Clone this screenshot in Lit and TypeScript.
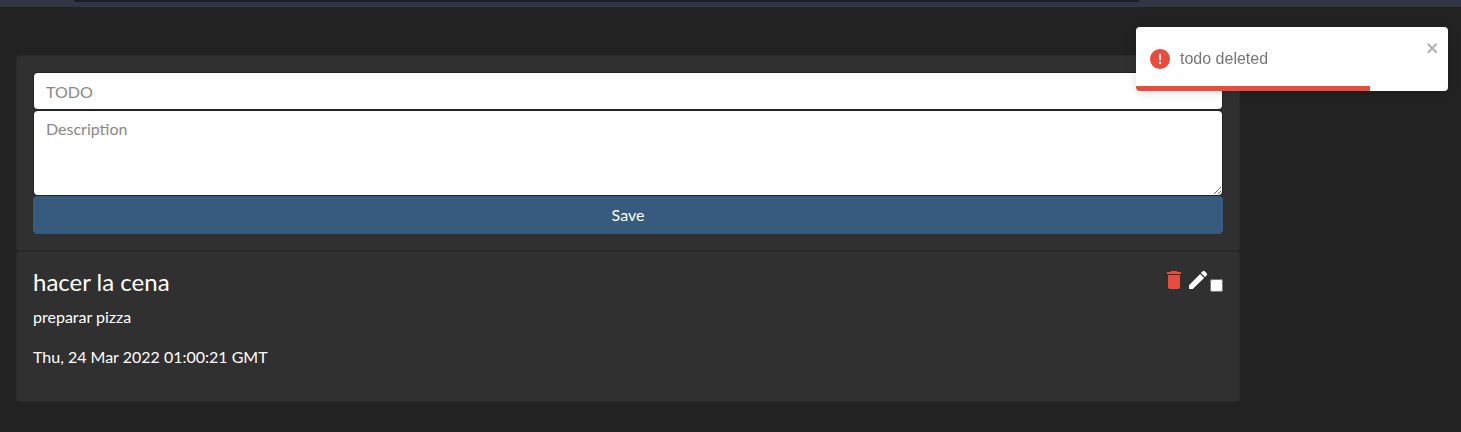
import { LitElement, html, css } from "lit";
import { customElement, property, state } from "lit/decorators.js";

interface Todo {
  title: string;
  description: string;
  date: string;
}

@customElement("todo-form")
class TodoForm extends LitElement {
  static styles = css`
    :host {
      display: block;
    }
    * {
      box-sizing: border-box;
    }
    .card {
      display: flex;
      flex-direction: column;
      padding: 16px;
      background: #303030;
      border: 1px solid rgba(0, 0, 0, 0.125);
      border-radius: 4px;
    }
    .control {
      display: block;
      width: 100%;
      margin: 0;
      padding: 6px 12px;
      font: inherit;
      color: #303030;
      background: #fff;
      background-clip: padding-box;
      border: 1px solid #222;
      border-radius: 4px;
      outline: none;
    }
    .control::placeholder {
      color: #888;
      opacity: 1;
    }
    .line {
      height: 38px;
    }
    .area {
      height: 86px;
      resize: vertical;
    }
    .save {
      padding: 6px 12px;
      font: inherit;
      color: #fff;
      background: #375a7f;
      border: 1px solid #375a7f;
      border-radius: 4px;
      cursor: pointer;
    }
  `;

  render() {
    return html`
      <form class="card" @submit=${(e: Event) => e.preventDefault()}>
        <input class="control line" type="text" placeholder="TODO" aria-label="TODO" />
        <textarea class="control area" rows="3" placeholder="Description" aria-label="Description"></textarea>
        <button class="save" type="submit">Save</button>
      </form>
    `;
  }
}

@customElement("todo-card")
class TodoCard extends LitElement {
  @property({ attribute: false }) todo!: Todo;

  static styles = css`
    :host {
      display: block;
    }
    * {
      box-sizing: border-box;
    }
    .card {
      padding: 16px;
      background: #303030;
      border: 1px solid rgba(0, 0, 0, 0.125);
      border-radius: 4px;
    }
    .head {
      display: flex;
      justify-content: space-between;
      align-items: flex-start;
      margin-bottom: 9px;
    }
    .title {
      margin: 0;
      font-size: 24px;
      font-weight: 400;
      line-height: 28px;
    }
    .actions {
      display: flex;
      align-items: flex-end;
    }
    .icon {
      display: block;
      padding: 0;
      border: 0;
      background: none;
      color: #fff;
      cursor: pointer;
    }
    .danger {
      color: #e74c3c;
    }
    .icon svg {
      display: block;
      fill: currentColor;
    }
    .done {
      width: 13px;
      height: 13px;
      margin: 0;
    }
    .text {
      margin: 0 0 16px;
    }
  `;

  render() {
    const { title, description, date } = this.todo;
    return html`
      <article class="card">
        <div class="head">
          <h4 class="title">${title}</h4>
          <div class="actions">
            <button class="icon danger" type="button" aria-label="Delete">
              <svg width="24" height="24" viewBox="0 0 24 24">
                <path d="M6 19c0 1.1.9 2 2 2h8c1.1 0 2-.9 2-2V7H6v12zM19 4h-3.5l-1-1h-5l-1 1H5v2h14V4z" />
              </svg>
            </button>
            <button class="icon" type="button" aria-label="Edit">
              <svg width="24" height="24" viewBox="0 0 24 24">
                <path d="M3 17.25V20.4a.6.6 0 0 0 .6.6h3.15L18.1 9.9l-4-4L3 17.25zM20.71 7.25a1.4 1.4 0 0 0 0-2l-2-2a1.4 1.4 0 0 0-2 0l-1.8 1.85 4 4 1.8-1.85z" />
              </svg>
            </button>
            <input class="done" type="checkbox" aria-label="Done" />
          </div>
        </div>
        <p class="text">${description}</p>
        <p class="text">${date}</p>
      </article>
    `;
  }
}

@customElement("toast-message")
class ToastMessage extends LitElement {
  @property() message = "";
  @property({ type: Number }) progress = 100;

  static styles = css`
    :host {
      display: block;
    }
    .toast {
      position: relative;
      box-sizing: border-box;
      display: flex;
      align-items: center;
      gap: 10px;
      min-height: 64px;
      padding: 8px 14px;
      overflow: hidden;
      border-radius: 4px;
      background: #fff;
      color: #757575;
      box-shadow: 0 1px 10px 0 rgba(0, 0, 0, 0.1), 0 2px 15px 0 rgba(0, 0, 0, 0.05);
      font: 16px/24px "Liberation Sans", Arial, sans-serif;
    }
    .mark {
      flex: none;
      fill: #e74c3c;
    }
    .close {
      position: absolute;
      top: 13px;
      right: 8px;
      padding: 0;
      border: 0;
      background: none;
      color: #000;
      opacity: 0.3;
      cursor: pointer;
    }
    .close svg {
      display: block;
      fill: currentColor;
    }
    .bar {
      position: absolute;
      left: 0;
      bottom: 0;
      height: 5px;
      background: #e74c3c;
    }
  `;

  render() {
    return html`
      <div class="toast" role="alert">
        <svg class="mark" width="20" height="20" viewBox="0 0 24 24">
          <path d="M11.983 0a12.206 12.206 0 00-8.51 3.653A11.8 11.8 0 000 12.207 11.779 11.779 0 0011.8 24h.214A12.111 12.111 0 0024 11.791 11.766 11.766 0 0011.983 0zM10.5 16.542a1.476 1.476 0 011.449-1.53h.027a1.527 1.527 0 011.523 1.47 1.475 1.475 0 01-1.449 1.53h-.027a1.529 1.529 0 01-1.523-1.47zM11 12.5v-6a1 1 0 012 0v6a1 1 0 11-2 0z" />
        </svg>
        <span>${this.message}</span>
        <button class="close" type="button" aria-label="Close">
          <svg width="14" height="16" viewBox="0 0 14 16">
            <path fill-rule="evenodd" d="M7.71 8.23l3.75 3.75-1.48 1.48-3.75-3.75-3.75 3.75L1 11.98l3.75-3.75L1 4.48 2.48 3l3.75 3.75L9.98 3l1.48 1.48-3.75 3.75z" />
          </svg>
        </button>
        <div class="bar" style="width:${this.progress}%"></div>
      </div>
    `;
  }
}

@customElement("app-root")
class AppRoot extends LitElement {
  @state() private todos: Todo[] = [
    {
      title: "hacer la cena",
      description: "preparar pizza",
      date: "Thu, 24 Mar 2022 01:00:21 GMT",
    },
  ];

  static styles = css`
    :host {
      display: block;
      min-height: 100vh;
      background: #222;
      color: #fff;
      font: 16px/24px Lato, sans-serif;
    }
    .chrome {
      height: 7px;
      padding: 0 322px 0 74px;
      box-sizing: border-box;
      background: #323544;
    }
    .address {
      height: 2px;
      border-radius: 0 0 4px 4px;
      background: #1b1c26;
    }
    .page {
      padding: 48px 221px 30px 16px;
    }
    .toasts {
      position: fixed;
      top: 27px;
      right: 13px;
      width: 312px;
    }
  `;

  render() {
    return html`
      <div class="chrome"><div class="address"></div></div>
      <main class="page">
        <todo-form></todo-form>
        ${this.todos.map((todo) => html`<todo-card .todo=${todo}></todo-card>`)}
      </main>
      <toast-message class="toasts" message="todo deleted" .progress=${75}></toast-message>
    `;
  }
}
